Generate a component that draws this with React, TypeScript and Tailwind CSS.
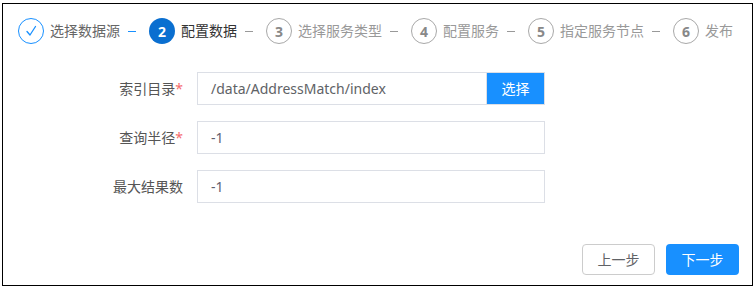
const steps = [
  { n: "1", label: "选择数据源", state: "done" },
  { n: "2", label: "配置数据", state: "active" },
  { n: "3", label: "选择服务类型", state: "todo" },
  { n: "4", label: "配置服务", state: "todo" },
  { n: "5", label: "指定服务节点", state: "todo" },
  { n: "6", label: "发布", state: "todo" },
];

const font = { fontFamily: '"Noto Sans", "Noto Sans CJK SC", sans-serif' };

const StepIcon = ({ n, state }: { n: string; state: string }) => {
  if (state === "done")
    return (
      <div className="w-[26px] h-[26px] rounded-full border border-[#1890ff] flex items-center justify-center shrink-0">
        <svg width="14" height="14" viewBox="0 0 14 14" fill="none">
          <path d="M3 7.5 L6 11 L11.5 2.5" stroke="#1890ff" strokeWidth="1.3" strokeLinecap="round" strokeLinejoin="round" />
        </svg>
      </div>
    );
  if (state === "active")
    return (
      <div className="w-[26px] h-[26px] rounded-full bg-[#0a6fd0] text-white font-bold text-[14px] flex items-center justify-center shrink-0">
        {n}
      </div>
    );
  return (
    <div className="w-[26px] h-[26px] rounded-full border border-[#a8a8a8] text-[#888] font-bold text-[14px] flex items-center justify-center shrink-0">
      {n}
    </div>
  );
};

export default function App() {
  return (
    <div className="bg-white w-[754px] h-[293px] pl-[2px] pt-[3px]" style={font}>
      <div className="w-[751px] h-[283px] border border-black flex flex-col">
        <div className="flex items-center pl-[15px] pt-[14px]">
          {steps.map((s, i) => (
            <div key={s.n} className="flex items-center">
              <StepIcon n={s.n} state={s.state} />
              <span
                className={
                  "ml-[6px] text-[14px] leading-[20px] " +
                  (s.state === "done" ? "text-[#666]" : s.state === "active" ? "text-[#333]" : "text-[#999]")
                }
              >
                {s.label}
              </span>
              {i < steps.length - 1 && (
                <div
                  className={
                    "ml-[8px] mr-[13px] w-[8px] h-px " + (i === 0 ? "bg-[#1890ff]" : "bg-[#999]")
                  }
                />
              )}
            </div>
          ))}
        </div>

        <div className="flex flex-col gap-[16px] mt-[28px] text-[14px]">
          <div className="flex items-center">
            <label className="w-[180px] text-right text-[#555]">
              索引目录<span className="text-[#f56c6c]">*</span>
            </label>
            <div className="ml-[14px] flex h-[33px]">
              <div className="w-[290px] border border-[#dcdfe6] flex items-center pl-[13px] text-[#606266]">
                /data/AddressMatch/index
              </div>
              <button className="w-[58px] bg-[#1890ff] text-white border border-[#dcdfe6] border-l-0">选择</button>
            </div>
          </div>
          <div className="flex items-center">
            <label className="w-[180px] text-right text-[#555]">
              查询半径<span className="text-[#f56c6c]">*</span>
            </label>
            <div className="ml-[14px] w-[348px] h-[33px] border border-[#dcdfe6] flex items-center pl-[13px] text-[#5f6170]">
              -1
            </div>
          </div>
          <div className="flex items-center">
            <label className="w-[180px] text-right text-[#555]">最大结果数</label>
            <div className="ml-[14px] w-[348px] h-[33px] border border-[#dcdfe6] flex items-center pl-[13px] text-[#5f6170]">
              -1
            </div>
          </div>
        </div>

        <div className="mt-auto mb-[10px] mr-[13px] flex justify-end gap-[11px] text-[14px]">
          <button className="w-[73px] h-[31px] rounded-[4px] border border-[#ccc] bg-white text-[#606266]">上一步</button>
          <button className="w-[73px] h-[31px] rounded-[4px] bg-[#1890ff] text-white">下一步</button>
        </div>
      </div>
    </div>
  );
}
